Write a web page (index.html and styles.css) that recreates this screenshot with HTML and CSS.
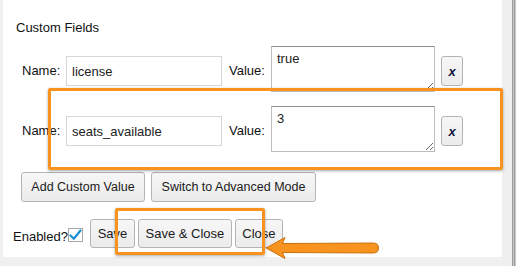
FILE: index.html
```html
<!DOCTYPE html>
<html lang="en">
<head>
    <meta charset="UTF-8">
    <meta name="viewport" content="width=device-width, initial-scale=1.0">
    <title>Custom Fields</title>
    <link rel="stylesheet" href="styles.css">
</head>
<body>
    <div class="stage">
        <div class="panel">
            <h3 class="section-title">Custom Fields</h3>

            <div class="field-row">
                <label class="field-label name-label">Name:</label>
                <input type="text" class="name-input" value="license">
                <label class="field-label value-label">Value:</label>
                <textarea class="value-input">true</textarea>
                <button class="remove-btn">x</button>
            </div>

            <div class="field-row">
                <label class="field-label name-label">Name:</label>
                <input type="text" class="name-input" value="seats_available">
                <label class="field-label value-label">Value:</label>
                <textarea class="value-input">3</textarea>
                <button class="remove-btn">x</button>
            </div>

            <div class="action-row">
                <button class="btn add-btn">Add Custom Value</button>
                <button class="btn switch-btn">Switch to Advanced Mode</button>
            </div>

            <div class="footer-row">
                <span class="enabled-label">Enabled?</span>
                <span class="checkbox">
                    <svg width="13" height="12" viewBox="0 0 13 12">
                        <path d="M1.5 6.5 L4.8 9.8 L11.5 1.5" fill="none" stroke="#1a8dd0" stroke-width="2.2" stroke-linecap="round" stroke-linejoin="round"/>
                    </svg>
                </span>
                <button class="btn save-btn">Save</button>
                <button class="btn save-close-btn">Save &amp; Close</button>
                <button class="btn close-btn">Close</button>
            </div>
        </div>
        <div class="gutter"></div>
        <div class="edge"></div>

        <!-- annotation overlays -->
        <div class="highlight highlight-row"></div>
        <div class="highlight highlight-buttons"></div>
        <svg class="arrow" width="120" height="26" viewBox="0 0 120 26">
            <path d="M2 13 L21 2.5 L18.5 8.5 L109 8 Q114.5 8 114.5 13 Q114.5 18 109 18 L18.5 17.5 L21 23.5 Z" fill="#f7931e" stroke="#c9720c" stroke-width="1" stroke-linejoin="round"/>
        </svg>
    </div>
</body>
</html>
```

FILE: styles.css
```css
body {
    margin: 0;
    background-color: #f0f0f0;
    font-family: "Liberation Sans", Arial, Helvetica, sans-serif;
    font-size: 13px;
    color: #111;
    overflow: hidden;
}
.stage {
    position: relative;
    display: flex;
    width: 516px;
    height: 266px;
    padding-left: 3px;
    box-sizing: border-box;
}
.panel {
    width: 499px;
    height: 257px;
    background-color: #fff;
    padding-top: 20px;
    box-sizing: border-box;
}
.gutter {
    width: 10px;
    background-color: #efefef;
}
.edge {
    width: 4px;
    background: repeating-linear-gradient(to right, #9c9c9c 0 1px, #c9c9c9 1px 2px);
}
.section-title {
    margin: 0 0 11px 13px;
    font-size: 13px;
    font-weight: normal;
    line-height: 15px;
}
.field-row {
    display: flex;
    align-items: flex-start;
    height: 46px;
    padding-left: 19px;
    margin-bottom: 14px;
}
.field-label {
    margin-top: 10px;
    line-height: 30px;
}
.name-label {
    width: 44px;
}
.value-label {
    width: 42px;
    margin-left: 7px;
}
.name-input {
    width: 156px;
    height: 30px;
    margin: 10px 0 0 0;
    padding: 0 5px;
    border: 1px solid #d6d6d6;
    box-sizing: border-box;
    font-family: inherit;
    font-size: 13px;
    color: #222;
    outline: none;
}
.value-input {
    width: 164px;
    height: 46px;
    margin: 0;
    padding: 4px 5px;
    border: 1px solid #bdbdbd;
    border-top-color: #8e8e8e;
    box-sizing: border-box;
    font-family: inherit;
    font-size: 13px;
    line-height: 15px;
    color: #222;
    outline: none;
}
.btn, .remove-btn {
    height: 30px;
    padding: 0;
    border: 1px solid #b4b4b4;
    border-radius: 3px;
    background: linear-gradient(#f7f7f7, #ebebeb);
    font-family: inherit;
    font-size: 13px;
    color: #1a1a1a;
    cursor: pointer;
}
.remove-btn {
    width: 22px;
    margin: 10px 0 0 6px;
    font-weight: bold;
    font-style: italic;
    font-size: 13px;
    color: #10163f;
}
.action-row {
    display: flex;
    gap: 6px;
    padding-left: 18px;
    margin-top: 20px;
}
.add-btn {
    width: 124px;
    font-size: 12.5px;
}
.switch-btn {
    width: 165px;
    font-size: 12.5px;
}
.footer-row {
    display: flex;
    align-items: center;
    gap: 3px;
    padding-left: 10px;
    margin-top: 17px;
}
.footer-row .btn {
    height: 29px;
}
.enabled-label {
    margin-top: 5px;
}
.checkbox {
    display: flex;
    align-items: center;
    justify-content: center;
    width: 15px;
    height: 14px;
    margin: 2px 4px 0 -3px;
    border: 1px solid #a8a8a8;
    background-color: #fff;
    box-sizing: border-box;
}
.save-btn {
    width: 45px;
}
.save-close-btn {
    width: 94px;
}
.close-btn {
    width: 48px;
}
.highlight {
    position: absolute;
    border: 3px solid #f7931e;
    border-radius: 2px;
    box-sizing: border-box;
    box-shadow: 0 1px 3px rgba(0, 0, 0, 0.35);
}
.highlight-row {
    left: 48px;
    top: 88px;
    width: 455px;
    height: 82px;
}
.highlight-buttons {
    left: 115px;
    top: 208px;
    width: 150px;
    height: 47px;
}
.arrow {
    position: absolute;
    left: 264px;
    top: 235px;
}
```
